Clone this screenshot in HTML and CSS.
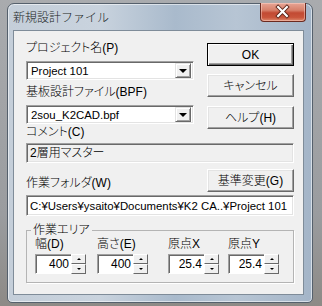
FILE: index.html
```html
<!DOCTYPE html>
<html lang="ja">
<head>
<meta charset="UTF-8">
<title>新規設計ファイル</title>
<link rel="stylesheet" href="styles.css">
</head>
<body>
    <div class="window">
        <div class="titlebar">
            <span class="title">新規設計ファイル</span>
            <span class="close">
                <svg width="46" height="19" viewBox="0 0 46 19">
                    <path d="M18.5 5 L27.5 14 M27.5 5 L18.5 14" stroke="#5a2418" stroke-width="4" stroke-linecap="square"/>
                    <path d="M18.5 5 L27.5 14 M27.5 5 L18.5 14" stroke="#fff" stroke-width="2.2" stroke-linecap="square"/>
                </svg>
            </span>
        </div>

        <div class="client">
            <div class="top">
                <div class="left">
                    <div class="label">プロジェクト名(P)</div>
                    <div class="combo">
                        <span class="value">Project 101</span>
                        <span class="drop"><i class="arrow"></i></span>
                    </div>
                    <div class="label second">基板設計ファイル(BPF)</div>
                    <div class="combo">
                        <span class="value">2sou_K2CAD.bpf</span>
                        <span class="drop"><i class="arrow"></i></span>
                    </div>
                </div>
                <div class="buttons">
                    <button class="btn default">OK</button>
                    <button class="btn cancel">キャンセル</button>
                    <button class="btn help">ヘルプ(H)</button>
                </div>
            </div>

            <div class="label comment-label">コメント(C)</div>
            <div class="field readonly">2層用マスター</div>

            <div class="folder-row">
                <div class="label">作業フォルダ(W)</div>
                <button class="btn">基準変更(G)</button>
            </div>
            <div class="field path">C:¥Users¥ysaito¥Documents¥K2 CA..¥Project 101</div>

            <fieldset class="area">
                <legend>作業エリア</legend>
                <div class="spins">
                    <div class="spin-item">
                        <div class="label">幅(D)</div>
                        <div class="spin"><span class="num">400</span><span class="updown"><b class="up"></b><b class="down"></b></span></div>
                    </div>
                    <div class="spin-item">
                        <div class="label">高さ(E)</div>
                        <div class="spin"><span class="num">400</span><span class="updown"><b class="up"></b><b class="down"></b></span></div>
                    </div>
                    <div class="spin-item">
                        <div class="label">原点X</div>
                        <div class="spin"><span class="num">25.4</span><span class="updown"><b class="up"></b><b class="down"></b></span></div>
                    </div>
                    <div class="spin-item">
                        <div class="label">原点Y</div>
                        <div class="spin"><span class="num">25.4</span><span class="updown"><b class="up"></b><b class="down"></b></span></div>
                    </div>
                </div>
            </fieldset>
        </div>
    </div>
</body>
</html>
```

FILE: styles.css
```css
* {
    box-sizing: border-box;
}
body {
    margin: 0;
    padding: 3px 0 0 7px;
    width: 322px;
    height: 306px;
    overflow: hidden;
    background: linear-gradient(180deg, #a9abae 0%, #9a9c9f 70%, #8d8a86 100%);
    font-family: "Liberation Sans", "Noto Sans CJK JP", sans-serif;
    font-size: 12px;
    font-weight: 300;
    font-feature-settings: "palt";
    line-height: 14px;
    color: #000;
}
.window {
    width: 306px;
    height: 300px;
    padding: 0 8px 7px 5px;
    border: 1px solid #55606c;
    border-radius: 7px 7px 5px 5px;
    background: linear-gradient(90deg, #c4ced9 0%, #c9d3de 30%, #a9bacc 55%, #b7c5d4 75%, #a4b5c8 100%);
    box-shadow: inset 0 0 0 1px rgba(255, 255, 255, 0.55);
}
.titlebar {
    height: 26px;
    display: flex;
    align-items: center;
    justify-content: space-between;
}
.title {
    color: #1b1f24;
    font-size: 12px;
    font-feature-settings: normal;
    padding-top: 1px;
}
.close {
    align-self: flex-start;
    margin: -1px -2px 0 0;
    width: 46px;
    height: 19px;
    border: 1px solid #6b2a20;
    border-top: none;
    border-radius: 0 0 4px 4px;
    background: linear-gradient(180deg, #e7a595 0%, #d7806a 40%, #c24a33 55%, #c9553b 80%, #dd8a6e 100%);
    box-shadow: inset 0 0 0 1px rgba(255, 220, 210, 0.45);
    display: flex;
}
.close svg {
    margin: -1px 0 0 -1px;
}
.client {
    height: 265px;
    border: 1px solid #7f8c99;
    background: #f0f0f0;
    padding: 10px 9px 0 12px;
}
.top {
    height: 82px;
    display: flex;
    justify-content: space-between;
    align-items: flex-start;
}
.left {
    width: 168px;
}
.combo {
    margin-top: 6px;
    height: 19px;
    background: #fff;
    border-top: 1px solid #a0a0a0;
    border-left: 1px solid #a0a0a0;
    border-bottom: 1px solid #fff;
    border-right: 1px solid #fff;
    box-shadow: inset 1px 1px 0 #696969, inset -1px -1px 0 #e3e3e3;
    display: flex;
    align-items: center;
    justify-content: space-between;
    padding: 0 2px 0 4px;
}
.value {
    font-size: 11.4px;
}
.label.second {
    margin-top: 5px;
}
.drop {
    width: 16px;
    height: 15px;
    background: #f0f0f0;
    border-top: 1px solid #e3e3e3;
    border-left: 1px solid #e3e3e3;
    border-bottom: 1px solid #696969;
    border-right: 1px solid #696969;
    box-shadow: inset 1px 1px 0 #fff, inset -1px -1px 0 #a0a0a0;
    display: flex;
    align-items: center;
    justify-content: center;
}
.arrow {
    width: 0;
    height: 0;
    border-left: 4px solid transparent;
    border-right: 4px solid transparent;
    border-top: 4px solid #000;
    margin-top: 1px;
}
.buttons {
    margin-top: 2px;
    display: flex;
    flex-direction: column;
}
.btn {
    width: 87px;
    height: 23px;
    padding: 0;
    font: inherit;
    color: #000;
    background: #f0f0f0;
    border-top: 1px solid #fff;
    border-left: 1px solid #fff;
    border-bottom: 1px solid #696969;
    border-right: 1px solid #696969;
    box-shadow: inset -1px -1px 0 #a0a0a0, inset 1px 1px 0 #e3e3e3;
    text-align: center;
}
.btn.default {
    border: 1px solid #000;
    box-shadow: inset 1px 1px 0 #fff, inset -1px -1px 0 #696969, inset -2px -2px 0 #a0a0a0;
}
.btn.cancel {
    margin-top: 8px;
}
.btn.help {
    margin-top: 9px;
}
.comment-label {
    margin-top: 2px;
}
.field {
    height: 20px;
    margin-top: 4px;
    padding: 2px 0 0 3px;
    background: #fff;
    border-top: 1px solid #a0a0a0;
    border-left: 1px solid #a0a0a0;
    border-bottom: 1px solid #fff;
    border-right: 1px solid #fff;
    box-shadow: inset 1px 1px 0 #696969, inset -1px -1px 0 #e3e3e3;
    white-space: nowrap;
    overflow: hidden;
}
.field.readonly {
    background: #f0f0f0;
}
.field.path {
    height: 21px;
    margin-top: 3px;
    padding-top: 3px;
    font-size: 11.4px;
}
.folder-row {
    margin-top: 6px;
    display: flex;
    justify-content: space-between;
    align-items: flex-start;
}
.folder-row .label {
    margin-top: 7px;
}
.area {
    margin: 7px 0 0 0;
    padding: 0 0 7px 8px;
    height: 60px;
    border: 1px solid #b4b4b4;
    box-shadow: 1px 1px 0 #fff;
}
.area legend {
    margin-left: -4px;
    padding: 0 2px;
}
.spins {
    display: grid;
    grid-template-columns: 62px 71px 60px 51px;
}
.spin {
    margin-top: 3px;
    width: 51px;
    height: 20px;
    display: flex;
}
.num {
    flex: 1;
    text-align: right;
    padding: 2px 2px 0 0;
    background: #fff;
    border-top: 1px solid #a0a0a0;
    border-left: 1px solid #a0a0a0;
    border-bottom: 1px solid #fff;
    box-shadow: inset 1px 1px 0 #696969;
}
.updown {
    width: 15px;
    display: flex;
    flex-direction: column;
}
.updown b {
    flex: 1;
    background: #f0f0f0;
    border-top: 1px solid #fff;
    border-left: 1px solid #fff;
    border-bottom: 1px solid #696969;
    border-right: 1px solid #696969;
    display: flex;
    align-items: center;
    justify-content: center;
}
.updown b::after {
    content: "";
    width: 0;
    height: 0;
    border-left: 2px solid transparent;
    border-right: 2px solid transparent;
}
.updown .up::after {
    border-bottom: 2px solid #000;
}
.updown .down::after {
    border-top: 2px solid #000;
}
```
